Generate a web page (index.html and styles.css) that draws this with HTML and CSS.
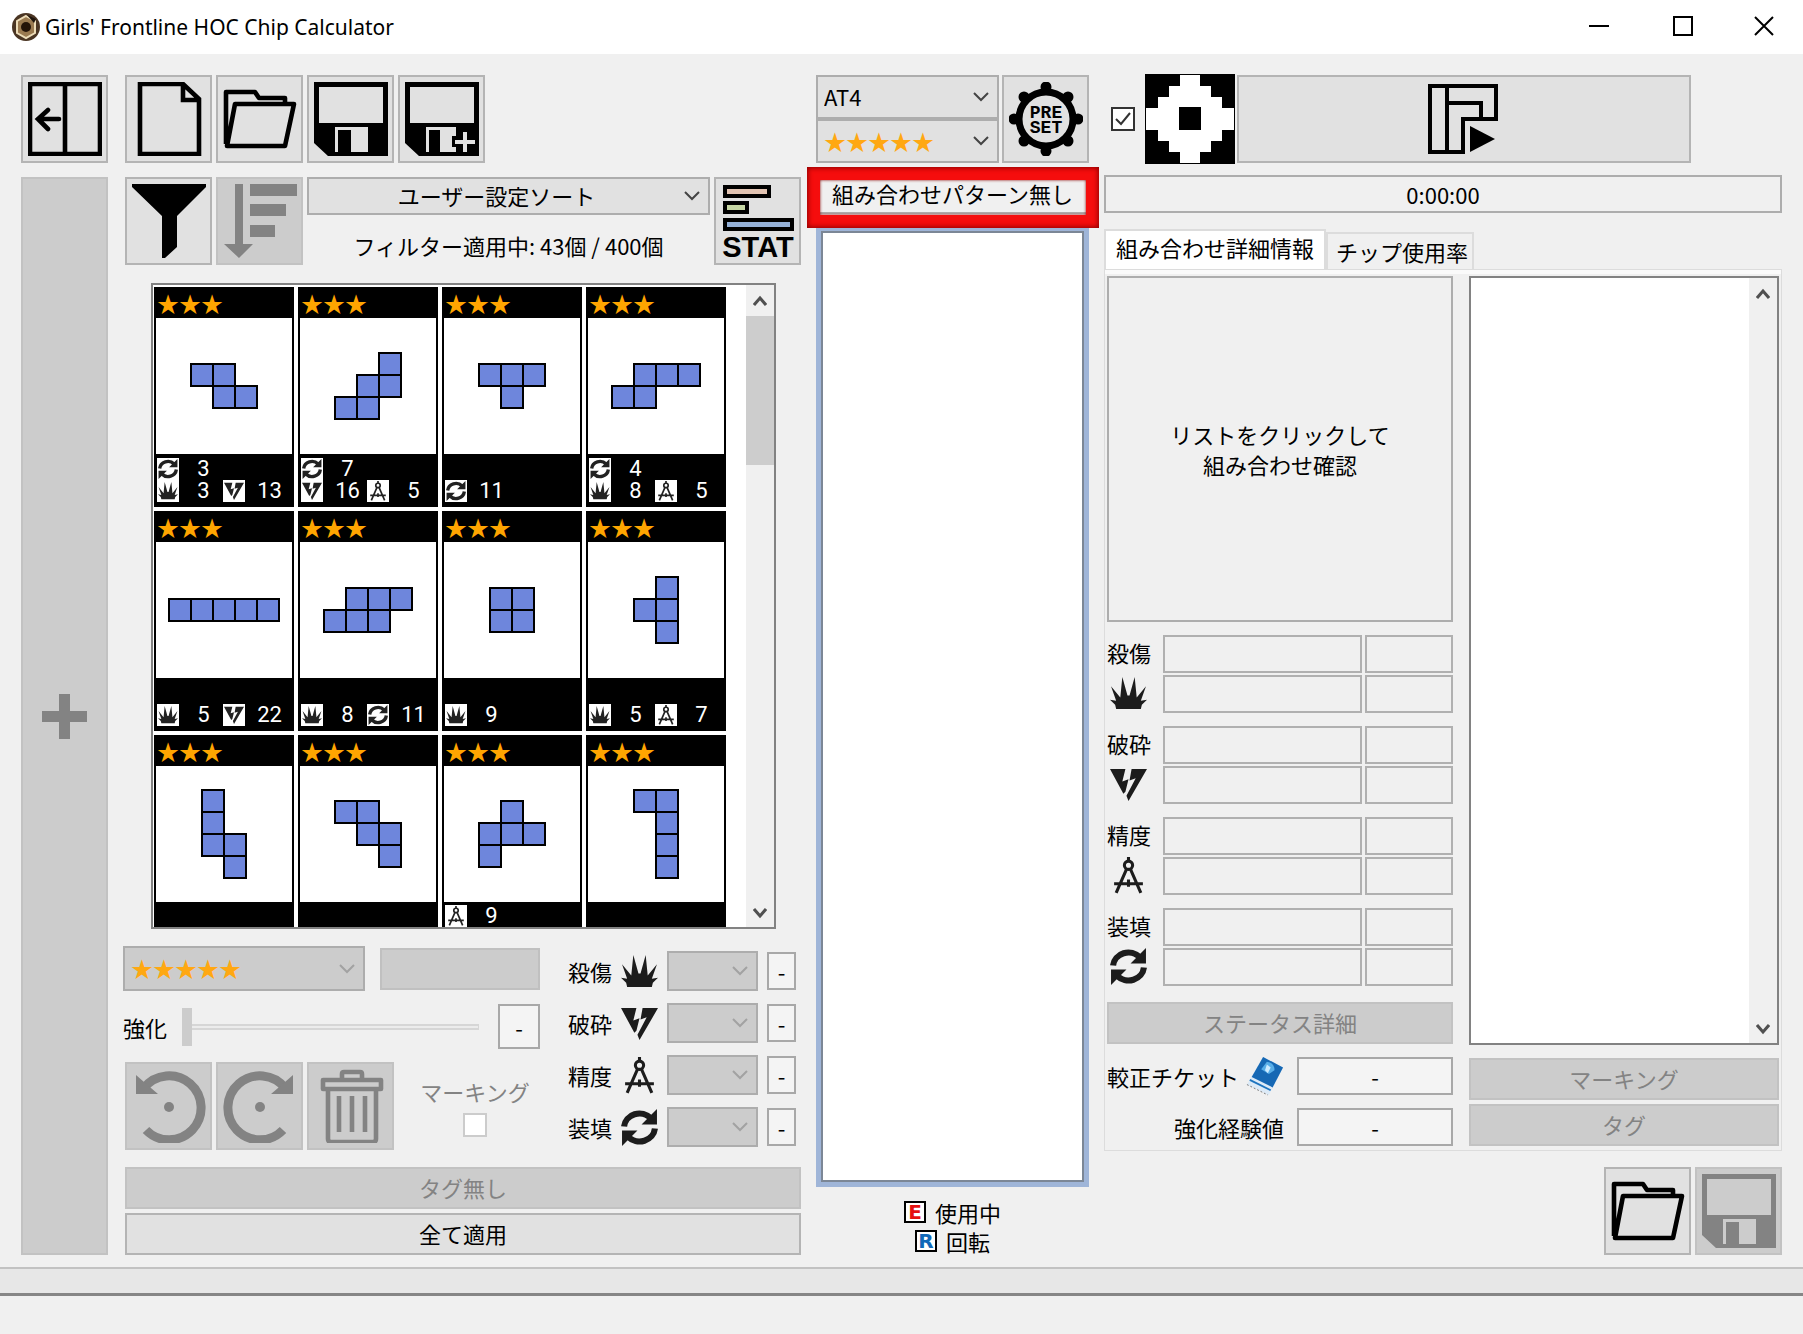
FILE: index.html
```html
<!DOCTYPE html>
<html lang="ja">
<head>
<meta charset="utf-8">
<title>Girls' Frontline HOC Chip Calculator</title>
<link rel="stylesheet" href="styles.css">
</head>
<body>
<svg class="sprite" aria-hidden="true">
  <symbol id="panel" viewBox="0 0 74 74"><path d="M2 2h70v70H2zM37 2v70M31 37H10M20 28L10 37l10 10" fill="none" stroke="currentColor" stroke-width="4.6" stroke-linecap="round"/></symbol>
  <symbol id="new" viewBox="0 0 74 74"><path d="M8 2h43l16 15v55H8zM51 2v16h16" fill="none" stroke="currentColor" stroke-width="4.6"/></symbol>
  <symbol id="open" viewBox="0 0 74 74"><path d="M3 62V10h29l4 6h26v7M12 22h59l-9 42H4z" fill="none" stroke="currentColor" stroke-width="4.6" stroke-linejoin="round"/></symbol>
  <symbol id="save" viewBox="0 0 74 74"><path fill-rule="evenodd" fill="currentColor" d="M0 0h74v74H14L0 61zM5 5v36h64V5zM21 45v25h3V48h13v22h17V45z"/></symbol>
  <symbol id="save-as" viewBox="0 0 74 74"><path fill-rule="evenodd" fill="currentColor" d="M0 0h74v74H14L0 61zM5 5v36h64V5zM21 45v25h3V48h11v22h16v-5h-4V54h4v-9z"/><path d="M60 50v20M50 60h20" stroke="#e1e1e1" stroke-width="4"/></symbol>
  <symbol id="filter" viewBox="0 0 74 74"><path fill="currentColor" d="M0 0h74v3L45 32v31L33 74h-3V32L0 3z"/></symbol>
  <symbol id="sort" viewBox="0 0 74 74"><path fill="currentColor" d="M12 0h8v60h10L16 74 1 60h11zM27 0h47v12H27zM27 20h36v12H27zM27 41h25v12H27z"/></symbol>
  <symbol id="solve" viewBox="0 0 74 74"><path d="M3 4h66v33H36v33H3zM20 4v66M20 21h34v16" fill="none" stroke="currentColor" stroke-width="4"/><path d="M43 44l25 13-25 13z" fill="currentColor"/></symbol>
  <symbol id="rotate" viewBox="0 0 74 74"><path d="M14 61A32 32 0 1 0 12 19" fill="none" stroke="currentColor" stroke-width="9"/><path d="M4 6l8 7 14 12H4z" fill="currentColor"/><circle cx="37" cy="38" r="5" fill="currentColor"/></symbol>
  <symbol id="trash" viewBox="0 0 74 74"><path d="M9 11h58v9H9zM28 10V5q0-2 2-2h16q2 0 2 2v5M14 21v49q0 3 3 3h42q3 0 3-3V21M25 27v36M38 27v36M51 27v36" fill="none" stroke="currentColor" stroke-width="4.6" stroke-linejoin="round"/></symbol>
  <symbol id="dmg" viewBox="0 0 36 36"><path fill="currentColor" d="M6 33l-1-4-5-5 6 1L1 11l9 11 2-20 5 18h2l5-18 2 20 9-11-5 14 6-1-5 5-1 4z"/></symbol>
  <symbol id="brk" viewBox="0 0 36 36"><path fill="currentColor" d="M0 3h15l-3 12 6-2-3 12-2 2zM21 3h15L18 34l-2-5 9-17-6 2z"/></symbol>
  <symbol id="acc" viewBox="0 0 36 36"><g fill="none" stroke="currentColor" stroke-width="3"><circle cx="18" cy="8" r="4"/><path d="M18 0v4M16 12L6 35M20 12l10 23M4 26h28M18 22v7"/></g></symbol>
  <symbol id="rld" viewBox="0 0 36 36"><path d="M3 17A15 14 0 0 1 29 9M33 19A15 14 0 0 1 7 27" fill="none" stroke="currentColor" stroke-width="6"/><path fill="currentColor" d="M35 0v15H20zM1 36V21h15z"/></symbol>
  <symbol id="up" viewBox="0 0 14 12"><path d="M1 10l6-7 6 7" fill="none" stroke="#505050" stroke-width="3"/></symbol>
  <symbol id="down" viewBox="0 0 14 12"><path d="M1 2l6 7 6-7" fill="none" stroke="#505050" stroke-width="3"/></symbol>
</svg>

<header class="titlebar">
  <svg class="app-icon" viewBox="0 0 28 28"><circle cx="14" cy="14" r="14" fill="#4a3523"/><path d="M14 3l9 5v12l-9 5-9-5V8z" fill="#9a7a50" stroke="#ecdcb8" stroke-width="2"/><circle cx="14" cy="14" r="5" fill="#241408"/><path d="M15 2l9 4-2 4z" fill="#1d130b"/></svg>
  <h1 class="title">Girls' Frontline HOC Chip Calculator</h1>
  <div class="window-buttons">
    <button aria-label="Minimize"><svg viewBox="0 0 20 20"><path d="M0 10h20"/></svg></button>
    <button aria-label="Maximize"><svg viewBox="0 0 20 20"><path d="M1 1h18v18H1z"/></svg></button>
    <button aria-label="Close"><svg viewBox="0 0 20 20"><path d="M1 1l18 18M19 1L1 19"/></svg></button>
  </div>
</header>

<main class="workspace">
  <section class="rail">
    <button class="btn icon-btn" aria-label="Hide panel"><svg><use href="#panel"/></svg></button>
    <button class="btn add-btn" aria-label="Add" disabled><svg viewBox="0 0 45 45"><path d="M17 0h11v17h17v11H28v17H17V28H0V17h17z" fill="currentColor"/></svg></button>
  </section>

  <section class="inventory">
    <div class="toolbar">
      <button class="btn icon-btn" aria-label="New"><svg><use href="#new"/></svg></button>
      <button class="btn icon-btn" aria-label="Open"><svg><use href="#open"/></svg></button>
      <button class="btn icon-btn" aria-label="Save"><svg><use href="#save"/></svg></button>
      <button class="btn icon-btn" aria-label="Save as"><svg><use href="#save-as"/></svg></button>
    </div>
    <div class="toolbar sorting">
      <button class="btn icon-btn" aria-label="Filter"><svg><use href="#filter"/></svg></button>
      <button class="btn icon-btn" aria-label="Sort" disabled><svg><use href="#sort"/></svg></button>
      <div class="sort-box">
        <select class="combo centered" aria-label="Sort order"><option>ユーザー設定ソート</option></select>
        <p class="filter-info">フィルター適用中: 43個 / 400個</p>
      </div>
      <button class="btn icon-btn" aria-label="Stat"><svg viewBox="0 0 74 74"><g stroke="#000" stroke-width="4"><path d="M4 3h44v9H4z" fill="#e2c3b2"/><path d="M4 19h22v9H4z" fill="#c6d6a4"/><path d="M4 36h67v9H4z" fill="#94b0d6"/></g><text class="stat-text" x="37" y="73">STAT</text></svg></button>
    </div>

    <div class="chip-list">
      <div class="chips">
        <article class="chip"><p class="rank">★★★</p><div class="shape"><svg width="68" height="46" viewBox="-1 -1 68 46"><path d="M0 0h22v22H0zM22 0h22v22H22zM22 22h22v22H22zM44 22h22v22H44z"/></svg></div>
          <div class="stats"><svg><use href="#rld"/></svg><b>3</b><i></i><i></i><svg><use href="#dmg"/></svg><b>3</b><svg><use href="#brk"/></svg><b>13</b></div></article>
        <article class="chip"><p class="rank">★★★</p><div class="shape"><svg width="68" height="68" viewBox="-1 -1 68 68"><path d="M44 0h22v22H44zM22 22h22v22H22zM44 22h22v22H44zM0 44h22v22H0zM22 44h22v22H22z"/></svg></div>
          <div class="stats"><svg><use href="#rld"/></svg><b>7</b><i></i><i></i><svg><use href="#brk"/></svg><b>16</b><svg><use href="#acc"/></svg><b>5</b></div></article>
        <article class="chip"><p class="rank">★★★</p><div class="shape"><svg width="68" height="46" viewBox="-1 -1 68 46"><path d="M0 0h22v22H0zM22 0h22v22H22zM44 0h22v22H44zM22 22h22v22H22z"/></svg></div>
          <div class="stats"><svg><use href="#rld"/></svg><b>11</b></div></article>
        <article class="chip"><p class="rank">★★★</p><div class="shape"><svg width="90" height="46" viewBox="-1 -1 90 46"><path d="M22 0h22v22H22zM44 0h22v22H44zM66 0h22v22H66zM0 22h22v22H0zM22 22h22v22H22z"/></svg></div>
          <div class="stats"><svg><use href="#rld"/></svg><b>4</b><i></i><i></i><svg><use href="#dmg"/></svg><b>8</b><svg><use href="#acc"/></svg><b>5</b></div></article>

        <article class="chip"><p class="rank">★★★</p><div class="shape"><svg width="112" height="24" viewBox="-1 -1 112 24"><path d="M0 0h22v22H0zM22 0h22v22H22zM44 0h22v22H44zM66 0h22v22H66zM88 0h22v22H88z"/></svg></div>
          <div class="stats"><svg><use href="#dmg"/></svg><b>5</b><svg><use href="#brk"/></svg><b>22</b></div></article>
        <article class="chip"><p class="rank">★★★</p><div class="shape"><svg width="90" height="46" viewBox="-1 -1 90 46"><path d="M22 0h22v22H22zM44 0h22v22H44zM66 0h22v22H66zM0 22h22v22H0zM22 22h22v22H22zM44 22h22v22H44z"/></svg></div>
          <div class="stats"><svg><use href="#dmg"/></svg><b>8</b><svg><use href="#rld"/></svg><b>11</b></div></article>
        <article class="chip"><p class="rank">★★★</p><div class="shape"><svg width="46" height="46" viewBox="-1 -1 46 46"><path d="M0 0h22v22H0zM22 0h22v22H22zM0 22h22v22H0zM22 22h22v22H22z"/></svg></div>
          <div class="stats"><svg><use href="#dmg"/></svg><b>9</b></div></article>
        <article class="chip"><p class="rank">★★★</p><div class="shape"><svg width="46" height="68" viewBox="-1 -1 46 68"><path d="M22 0h22v22H22zM0 22h22v22H0zM22 22h22v22H22zM22 44h22v22H22z"/></svg></div>
          <div class="stats"><svg><use href="#dmg"/></svg><b>5</b><svg><use href="#acc"/></svg><b>7</b></div></article>

        <article class="chip"><p class="rank">★★★</p><div class="shape"><svg width="46" height="90" viewBox="-1 -1 46 90"><path d="M0 0h22v22H0zM0 22h22v22H0zM0 44h22v22H0zM22 44h22v22H22zM22 66h22v22H22z"/></svg></div>
          <div class="stats"></div></article>
        <article class="chip"><p class="rank">★★★</p><div class="shape"><svg width="68" height="68" viewBox="-1 -1 68 68"><path d="M0 0h22v22H0zM22 0h22v22H22zM22 22h22v22H22zM44 22h22v22H44zM44 44h22v22H44z"/></svg></div>
          <div class="stats"></div></article>
        <article class="chip"><p class="rank">★★★</p><div class="shape"><svg width="68" height="68" viewBox="-1 -1 68 68"><path d="M22 0h22v22H22zM0 22h22v22H0zM22 22h22v22H22zM44 22h22v22H44zM0 44h22v22H0z"/></svg></div>
          <div class="stats two-lines"><svg><use href="#acc"/></svg><b>9</b></div></article>
        <article class="chip"><p class="rank">★★★</p><div class="shape"><svg width="46" height="90" viewBox="-1 -1 46 90"><path d="M0 0h22v22H0zM22 0h22v22H22zM22 22h22v22H22zM22 44h22v22H22zM22 66h22v22H22z"/></svg></div>
          <div class="stats"></div></article>
      </div>
      <div class="scrollbar"><svg><use href="#up"/></svg><span class="thumb"></span><svg class="last"><use href="#down"/></svg></div>
    </div>

    <div class="editor">
      <div class="edit-main">
        <div class="edit-row">
          <select class="combo stars edit-stars" aria-label="Stars" disabled><option>★★★★★</option></select>
          <input class="color-box" aria-label="Color" disabled>
        </div>
        <div class="edit-row level">
          <label for="level">強化</label>
          <input id="level" type="range" min="0" max="20" value="0" disabled>
          <output class="value level-value">-</output>
        </div>
        <div class="toolbar">
          <button class="btn icon-btn" aria-label="Rotate left" disabled><svg><use href="#rotate"/></svg></button>
          <button class="btn icon-btn" aria-label="Rotate right" disabled><svg class="mirrored"><use href="#rotate"/></svg></button>
          <button class="btn icon-btn" aria-label="Delete" disabled><svg><use href="#trash"/></svg></button>
          <label class="marking">マーキング<input class="check" type="checkbox" disabled></label>
        </div>
      </div>
      <div class="edit-stats">
        <label for="s1">殺傷</label><svg><use href="#dmg"/></svg><select id="s1" class="combo" disabled></select><output class="value">-</output>
        <label for="s2">破砕</label><svg><use href="#brk"/></svg><select id="s2" class="combo" disabled></select><output class="value">-</output>
        <label for="s3">精度</label><svg><use href="#acc"/></svg><select id="s3" class="combo" disabled></select><output class="value">-</output>
        <label for="s4">装填</label><svg><use href="#rld"/></svg><select id="s4" class="combo" disabled></select><output class="value">-</output>
      </div>
    </div>
    <div class="wide-buttons">
      <button class="btn text-btn" disabled>タグ無し</button>
      <button class="btn text-btn">全て適用</button>
    </div>
  </section>

  <section class="combinations">
    <div class="preset-row">
      <div class="selectors">
        <select class="combo" aria-label="HOC"><option>AT4</option></select>
        <select class="combo stars" aria-label="HOC stars"><option>★★★★★</option></select>
      </div>
      <button class="btn icon-btn" aria-label="Preset"><svg viewBox="0 0 74 74"><circle cx="37" cy="37" r="27" fill="none" stroke="#000" stroke-width="7"/><path d="M37 5v0M37 69v0M5 37v0M69 37v0M15 15v0M59 15v0M15 59v0M59 59v0" stroke="#000" stroke-width="11" stroke-linecap="round"/><text class="preset-text" x="37" y="36">PRE</text><text class="preset-text" x="37" y="51">SET</text></svg></button>
    </div>
    <div class="pattern">
      <p class="pattern-label">組み合わせパターン無し</p>
      <span class="highlight"></span>
    </div>
    <div class="result-list"></div>
    <div class="legend">
      <p><span class="mark used">E</span>使用中</p>
      <p><span class="mark turned">R</span>回転</p>
    </div>
  </section>

  <section class="details">
    <div class="solve-row">
      <input class="check" type="checkbox" aria-label="Symmetry" checked>
      <svg class="board-icon" viewBox="0 0 90 90"><path fill="#000" d="M0 0h90v90H0z"/><path fill="#fff" fill-rule="evenodd" d="M35 1h20v11h11v11h11v11h12v22H77v11H66v11H55v11H35V78H24V67H13V56H1V34h12V23h11V12h11zM34 33v23h22V33z"/></svg>
      <button class="btn solve" aria-label="Calculate"><svg><use href="#solve"/></svg></button>
    </div>
    <div class="time">0:00:00</div>
    <div class="tabs" role="tablist">
      <button class="tab active" role="tab">組み合わせ詳細情報</button>
      <button class="tab" role="tab">チップ使用率</button>
    </div>
    <div class="pane">
      <div class="summary">
        <div class="board">リストをクリックして<br>組み合わせ確認</div>
        <div class="stat-bars">
          <div class="stat-group"><div class="stat-name">殺傷<svg><use href="#dmg"/></svg></div><div class="cells"><span></span><span></span><span></span><span></span></div></div>
          <div class="stat-group"><div class="stat-name">破砕<svg><use href="#brk"/></svg></div><div class="cells"><span></span><span></span><span></span><span></span></div></div>
          <div class="stat-group"><div class="stat-name">精度<svg><use href="#acc"/></svg></div><div class="cells"><span></span><span></span><span></span><span></span></div></div>
          <div class="stat-group"><div class="stat-name">装填<svg><use href="#rld"/></svg></div><div class="cells"><span></span><span></span><span></span><span></span></div></div>
        </div>
        <button class="btn text-btn status-btn" disabled>ステータス詳細</button>
        <div class="cost">
          <span class="cost-name">較正チケット<svg class="ticket" viewBox="0 0 40 40"><path d="M18 0l21 11-15 29L1 29z" fill="#dceaf7"/><path d="M18 0l21 11-11 21L6 21z" fill="#1668b4"/><path d="M22 5q8 1 8 9l-6 4-8-5z" fill="#58aee8"/><path d="M22 8l4 3-3 6-3-3z" fill="#cdebff"/><path d="M4 24l22 11" stroke="#1c74bf" stroke-width="2"/><path d="M1 29l22 11" stroke="#777" stroke-dasharray="2 2"/></svg></span>
          <output class="value">-</output>
        </div>
        <div class="cost">
          <span class="cost-name">強化経験値</span>
          <output class="value">-</output>
        </div>
      </div>
      <div class="used-chips">
        <div class="used-list"><div class="scrollbar"><svg><use href="#up"/></svg><svg class="last"><use href="#down"/></svg></div></div>
        <div class="wide-buttons">
          <button class="btn text-btn" disabled>マーキング</button>
          <button class="btn text-btn" disabled>タグ</button>
        </div>
      </div>
    </div>
    <div class="toolbar file-buttons">
      <button class="btn icon-btn" aria-label="Open combination"><svg><use href="#open"/></svg></button>
      <button class="btn icon-btn" aria-label="Save combination" disabled><svg><use href="#save"/></svg></button>
    </div>
  </section>
</main>

<footer class="statusbar"><div class="status-strip"></div></footer>
</body>
</html>
```
FILE: styles.css
```css
* { box-sizing: border-box; }

body {
  margin: 0;
  min-height: 100vh;
  display: flex;
  flex-direction: column;
  background: #f0f0f0;
  color: #000;
  font: 22px/30px "Noto Sans CJK JP", sans-serif;
}

p, h1 { margin: 0; }
button, select, input { font: inherit; color: inherit; margin: 0; }
svg { display: block; flex: none; }
.sprite { position: absolute; width: 0; height: 0; }

/* title bar */
.titlebar {
  display: flex;
  align-items: center;
  height: 54px;
  padding-left: 12px;
  background: #fff;
}
.app-icon { width: 28px; height: 28px; }
.title { margin-left: 5px; font: 21px/30px "Noto Sans", sans-serif; }
.window-buttons { display: flex; margin-left: auto; }
.window-buttons button {
  display: flex;
  justify-content: center;
  width: 84px;
  padding: 15px 0 17px;
  border: 0;
  background: none;
}
.window-buttons svg { width: 20px; height: 20px; fill: none; stroke: #000; stroke-width: 2; }
.window-buttons button:last-child { width: 78px; }

/* buttons */
.btn {
  display: flex;
  align-items: center;
  justify-content: center;
  padding: 0;
  border: 2px solid #b4b4b4;
  border-radius: 0;
  background: #e1e1e1;
}
.btn:disabled { border-color: #c2c2c2; background: #ccc; color: #838383; }
.icon-btn { flex: none; width: 87px; height: 88px; }
.icon-btn svg, .solve svg { width: 74px; height: 74px; }
.text-btn { width: 100%; height: 42px; padding-bottom: 3px; }
.toolbar { display: flex; gap: 4px; padding-left: 2px; }
.wide-buttons { display: flex; flex-direction: column; gap: 4px; }
.mirrored { transform: scaleX(-1); }

/* drop-downs and boxes */
.combo {
  appearance: none;
  width: 100%;
  padding: 0 30px 3px 6px;
  border: 2px solid #adadad;
  border-radius: 0;
  background: #e1e1e1 url("data:image/svg+xml,%3Csvg xmlns='http://www.w3.org/2000/svg' width='16' height='10'%3E%3Cpath d='M1 1l7 7 7-7' fill='none' stroke='%23444' stroke-width='2'/%3E%3C/svg%3E") no-repeat right 8px center;
  opacity: 1;
}
.combo:disabled {
  background-color: #ccc;
  background-image: url("data:image/svg+xml,%3Csvg xmlns='http://www.w3.org/2000/svg' width='16' height='10'%3E%3Cpath d='M1 1l7 7 7-7' fill='none' stroke='%23a2a2a2' stroke-width='2'/%3E%3C/svg%3E");
}
.combo.centered { text-align: center; text-align-last: center; }
.combo.stars { color: #ffa812; }
.value {
  display: flex;
  align-items: center;
  justify-content: center;
  border: 2px solid #a8a8a8;
  background: #f4f4f4;
}
.check {
  appearance: none;
  width: 24px;
  height: 24px;
  border: 2px solid #333;
  background: #fff;
}
.check:checked { background: #fff url("data:image/svg+xml,%3Csvg xmlns='http://www.w3.org/2000/svg' width='20' height='20'%3E%3Cpath d='M3 10l5 5 9-11' fill='none' stroke='%23333' stroke-width='2'/%3E%3C/svg%3E") center no-repeat; }
.check:disabled { border-color: #ccc; }

/* columns */
.workspace {
  flex: 1;
  display: grid;
  grid-template-columns: 87px minmax(0, 1fr) 273px minmax(0, 1fr);
  gap: 15px;
  padding: 21px 21px 12px;
}
.rail, .inventory, .combinations, .details { display: flex; flex-direction: column; }
.rail { gap: 14px; }
.add-btn { flex: 1; }
.add-btn svg { width: 45px; height: 45px; }

/* chip inventory */
.sorting { margin-top: 14px; }
.sort-box { flex: 1; display: flex; flex-direction: column; justify-content: space-between; }
.sort-box .combo { height: 38px; }
.filter-info { padding-bottom: 3px; text-align: center; line-height: 34px; }
.stat-text { font: bold 29px "Liberation Sans", sans-serif; text-anchor: middle; }

.chip-list {
  flex: 1 1 0;
  min-height: 0;
  display: flex;
  justify-content: space-between;
  overflow: hidden;
  margin: 18px 25px 17px 28px;
  border: 2px solid #828282;
  background: #fff;
}
.chips {
  flex: 1;
  display: grid;
  grid-template-columns: repeat(auto-fill, 140px);
  grid-auto-rows: 220px;
  gap: 4px;
  height: 0;
  padding: 2px 0 0 1px;
}
.chip { display: flex; flex-direction: column; padding: 0 2px; background: #000; }
.rank { height: 31px; padding-left: 1px; color: #ffa500; line-height: 30px; }
.shape { display: flex; align-items: center; justify-content: center; height: 136px; background: #fff; }
.shape path { fill: #6e86dc; stroke: #000; stroke-width: 2; }
.stats {
  flex: 1;
  display: grid;
  grid-template-columns: 22px 44px 22px 44px;
  grid-auto-rows: 22px;
  align-content: end;
  padding: 0 0 5px 1px;
}
.two-lines { align-content: start; padding-top: 3px; }
.stats svg { width: 22px; height: 22px; padding: 1px; background: #fff; color: #222; }
.stats b { padding-left: 5px; color: #fff; font: 22px/22px Roboto, sans-serif; text-align: center; }

.scrollbar { display: flex; flex-direction: column; align-items: center; width: 28px; background: #f0f0f0; }
.scrollbar svg { width: 14px; height: 12px; margin: 10px 0 9px; }
.scrollbar .last { margin: auto 0 8px; }
.thumb { width: 100%; height: 149px; background: #cdcdcd; }

/* chip editor */
.editor { display: flex; gap: 28px; padding-right: 5px; margin-bottom: 17px; }
.edit-main { flex: 1; display: flex; flex-direction: column; gap: 13px; }
.edit-row { display: flex; align-items: center; gap: 15px; height: 45px; }
.edit-stars { flex: 1; height: 45px; }
.color-box { width: 160px; height: 42px; border: 2px solid #c0c0c0; background: #ccc; }
.level input {
  appearance: none;
  flex: 1;
  min-width: 0;
  height: 38px;
  background: linear-gradient(#d6d6d6, #d6d6d6) center / 100% 6px no-repeat;
}
.level input::-webkit-slider-runnable-track { height: 38px; background: linear-gradient(#ececec, #ececec) center / 99% 2px no-repeat; }
.level input::-webkit-slider-thumb { appearance: none; width: 10px; height: 38px; background: #ccc; }
.level-value { width: 42px; height: 45px; margin-left: 4px; }
.marking {
  flex: 1;
  display: flex;
  flex-direction: column;
  align-items: center;
  gap: 7px;
  padding: 14px 0 0 12px;
  color: #838383;
}
.edit-stats {
  display: grid;
  grid-template-columns: 44px 37px 91px 29px;
  grid-auto-rows: 40px;
  align-items: center;
  gap: 12px 9px;
  padding-top: 5px;
}
.edit-stats svg { width: 37px; height: 37px; color: #1c1c1c; }
.edit-stats .combo { height: 40px; }
.edit-stats .value { height: 38px; }
.inventory > .wide-buttons { padding-left: 2px; }

/* combination list */
.preset-row { display: flex; gap: 3px; }
.selectors { flex: 1; display: grid; grid-auto-rows: 44px; }
.pattern { position: relative; margin: 12px 0; }
.pattern-label { height: 39px; border: 2px solid #b0b0b0; line-height: 33px; text-align: center; }
.highlight {
  position: absolute;
  inset: -8px -10px -14px -9px;
  border: 13px solid #f50d0d;
  box-shadow: inset 0 0 3px #800;
}
.highlight::before {
  content: "";
  position: absolute;
  inset: -13px;
  box-shadow: inset 0 0 5px 1px #8c0000;
}
.result-list { flex: 1; border: 5px solid #9fb5d8; outline: 2px solid #7c8796; outline-offset: -7px; background: #fff; }
.legend { display: flex; flex-direction: column; gap: 7px; padding: 14px 0 3px; }
.legend p { display: flex; justify-content: center; gap: 9px; line-height: 22px; }
.mark { width: 22px; border: 2px solid #000; background: #fff; font: bold 20px/18px "DejaVu Sans", sans-serif; text-align: center; }
.used { color: #e51010; }
.turned { color: #1068b8; }
.preset-text { font: bold 18px "Liberation Mono", monospace; text-anchor: middle; }

/* combination details */
.solve-row { display: flex; align-items: center; gap: 2px; height: 88px; padding: 0 91px 0 7px; }
.solve-row .check { margin-right: 8px; }
.board-icon { width: 90px; height: 90px; }
.solve { flex: 1; height: 88px; }
.time { height: 38px; margin: 12px 0 16px; border: 2px solid #adadad; line-height: 34px; text-align: center; }
.tabs { display: flex; align-items: flex-end; height: 40px; }
.tab { height: 37px; padding: 0 4px 2px 8px; border: 2px solid #dcdcdc; border-bottom: 0; background: #f0f0f0; line-height: 30px; }
.tab.active { height: 40px; padding: 0 10px 6px; background: #fff; }
.pane {
  display: grid;
  grid-template-columns: minmax(0, 346fr) minmax(0, 310fr);
  gap: 16px;
  padding: 6px 2px 4px;
  border: 1px solid #dcdcdc;
  box-shadow: inset 0 4px #fafafa;
}
.summary { display: flex; flex-direction: column; gap: 13px; }
.board {
  display: flex;
  align-items: center;
  justify-content: center;
  aspect-ratio: 1;
  border: 2px solid #adadad;
  background: #f0f0f0;
  text-align: center;
}
.stat-bars { display: flex; flex-direction: column; gap: 13px; margin-bottom: 3px; }
.stat-group { display: grid; grid-template-columns: 44px 1fr; gap: 12px; }
.stat-name { display: flex; flex-direction: column; gap: 8px; padding-top: 2px; }
.stat-name svg { width: 37px; height: 37px; margin-left: 3px; color: #1c1c1c; }
.cells { display: grid; grid-template-columns: 199fr 88fr; grid-auto-rows: 38px; gap: 2px 3px; }
.cells span { border: 2px solid #b0b0b0; }
.cost { display: flex; align-items: center; justify-content: flex-end; gap: 13px; height: 38px; }
.cost-name { display: flex; align-items: center; gap: 7px; white-space: nowrap; }
.cost .value { width: 156px; height: 38px; }
.ticket { width: 38px; height: 40px; }
.used-chips { display: flex; flex-direction: column; gap: 13px; }
.used-list { flex: 1; display: flex; justify-content: flex-end; border: 2px solid #828282; background: #fff; }
.file-buttons { justify-content: flex-end; margin-top: 16px; }

/* status bar */
.statusbar { height: 67px; border-top: 2px solid #c2c2c2; }
.status-strip { height: 27px; border-bottom: 3px solid #868686; background: #e7e7e7; }
```
